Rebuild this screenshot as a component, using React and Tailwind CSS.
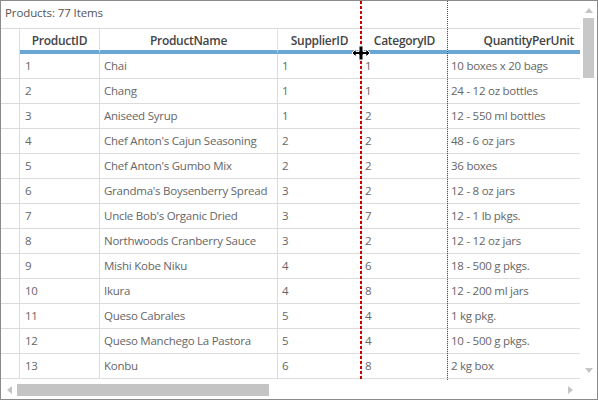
import React from 'react';

const rows = [
  [1, 'Chai', 1, 1, '10 boxes x 20 bags'],
  [2, 'Chang', 1, 1, '24 - 12 oz bottles'],
  [3, 'Aniseed Syrup', 1, 2, '12 - 550 ml bottles'],
  [4, "Chef Anton's Cajun Seasoning", 2, 2, '48 - 6 oz jars'],
  [5, "Chef Anton's Gumbo Mix", 2, 2, '36 boxes'],
  [6, "Grandma's Boysenberry Spread", 3, 2, '12 - 8 oz jars'],
  [7, "Uncle Bob's Organic Dried", 3, 7, '12 - 1 lb pkgs.'],
  [8, 'Northwoods Cranberry Sauce', 3, 2, '12 - 12 oz jars'],
  [9, 'Mishi Kobe Niku', 4, 6, '18 - 500 g pkgs.'],
  [10, 'Ikura', 4, 8, '12 - 200 ml jars'],
  [11, 'Queso Cabrales', 5, 4, '1 kg pkg.'],
  [12, 'Queso Manchego La Pastora', 5, 4, '10 - 500 g pkgs.'],
  [13, 'Konbu', 6, 8, '2 kg box'],
];

const headers = [
  { label: 'ProductID', align: 'justify-center' },
  { label: 'ProductName', align: 'justify-center' },
  { label: 'SupplierID', align: 'justify-center' },
  { label: 'CategoryID', align: 'justify-center' },
  { label: 'QuantityPerUnit', align: 'justify-end pr-[35px]' },
];

const cellPad = ['pl-[5px]', 'pl-[4px]', 'pl-[4px]', 'pl-[3px]', 'pl-[3px]'];

function ResizeCursor() {
  return (
    <svg width="20" height="16" viewBox="0 0 20 16" className="absolute left-[350px] top-[44px]">
      <path
        d="M1 8 L5 4 L5 6.5 L8 6.5 L8 1 L12 1 L12 6.5 L15 6.5 L15 4 L19 8 L15 12 L15 9.5 L12 9.5 L12 15 L8 15 L8 9.5 L5 9.5 L5 12 Z"
        fill="#000"
        stroke="#fff"
        strokeWidth="1"
      />
    </svg>
  );
}

function Tri({ dir }) {
  const pts = {
    up: '0,5 4,0 8,5',
    down: '0,0 8,0 4,5',
    left: '5,0 5,8 0,4',
    right: '0,0 0,8 5,4',
  }[dir];
  const size = dir === 'up' || dir === 'down' ? { w: 8, h: 5 } : { w: 5, h: 8 };
  return (
    <svg width={size.w} height={size.h} viewBox={`0 0 ${size.w} ${size.h}`}>
      <polygon points={pts} fill="#c4c4c4" />
    </svg>
  );
}

export default function App() {
  return (
    <div
      className="w-[598px] h-[400px] bg-white border border-[#8a8a8a] flex flex-col text-[11.5px] relative overflow-hidden"
      style={{ fontFamily: '"Open Sans", "Noto Sans", sans-serif' }}
    >
      <div className="flex flex-1 min-h-0">
        <div className="flex-1 min-w-0 overflow-hidden">
          {/* group panel title */}
          <div className="h-[27px] flex items-center pl-[4px] pb-[4px] text-[#555] tracking-[-0.1px]">
            Products: 77 Items
          </div>

          <div className="grid grid-cols-[19px_80px_178px_84px_86px_162px] w-max border-t border-[#dcdcdc]">
            {/* header */}
            <div className="h-[25px] border-r border-[#dcdcdc]" />
            {headers.map(h => (
              <div
                key={h.label}
                className={`h-[25px] flex items-center ${h.align} pt-[2px] text-[12px] font-semibold text-[#444] border-r border-[#e2e2e2] border-b-[4px] border-b-[#6aa7d3] tracking-[-0.3px]`}
              >
                {h.label}
              </div>
            ))}

            {/* rows */}
            {rows.map(r => (
              <React.Fragment key={r[0]}>
                <div className="h-[25px] border-r border-b border-[#dcdcdc]" />
                {r.map((v, i) => (
                  <div
                    key={i}
                    className={`h-[25px] flex items-center ${cellPad[i]} text-[#666] border-r border-b border-[#dcdcdc] whitespace-nowrap overflow-hidden tracking-[-0.25px]`}
                  >
                    {v}
                  </div>
                ))}
              </React.Fragment>
            ))}
          </div>
        </div>

        {/* vertical scrollbar */}
        <div className="w-[17px] flex flex-col items-center bg-white">
          <div className="h-[17px] flex items-center justify-center pt-[2px]">
            <Tri dir="up" />
          </div>
          <div className="flex-1 w-full px-[3px]">
            <div className="h-[60px] bg-[#c8c8c8]" />
          </div>
          <div className="h-[17px] flex items-center justify-center pb-[4px]">
            <Tri dir="down" />
          </div>
        </div>
      </div>

      {/* horizontal scrollbar */}
      <div className="h-[18px] flex">
        <div className="flex-1 flex items-center">
          <div className="w-[16px] h-full flex items-center justify-center">
            <Tri dir="left" />
          </div>
          <div className="flex-1 h-full py-[3px]">
            <div className="w-[252px] h-full bg-[#c4c4c4]" />
          </div>
          <div className="w-[20px] h-full flex items-center justify-center">
            <Tri dir="right" />
          </div>
        </div>
        <div className="w-[17px]" />
      </div>

      {/* column drag indicators */}
      <svg width="2" height="380" className="absolute left-[359px] top-0">
        <line x1="1" y1="0" x2="1" y2="380" stroke="#cc0000" strokeWidth="2" strokeDasharray="3 2" />
      </svg>
      <svg width="1" height="380" className="absolute left-[446px] top-0">
        <line x1="0.5" y1="0" x2="0.5" y2="380" stroke="#555" strokeWidth="1" strokeDasharray="1 1" />
      </svg>
      <ResizeCursor />
    </div>
  );
}
